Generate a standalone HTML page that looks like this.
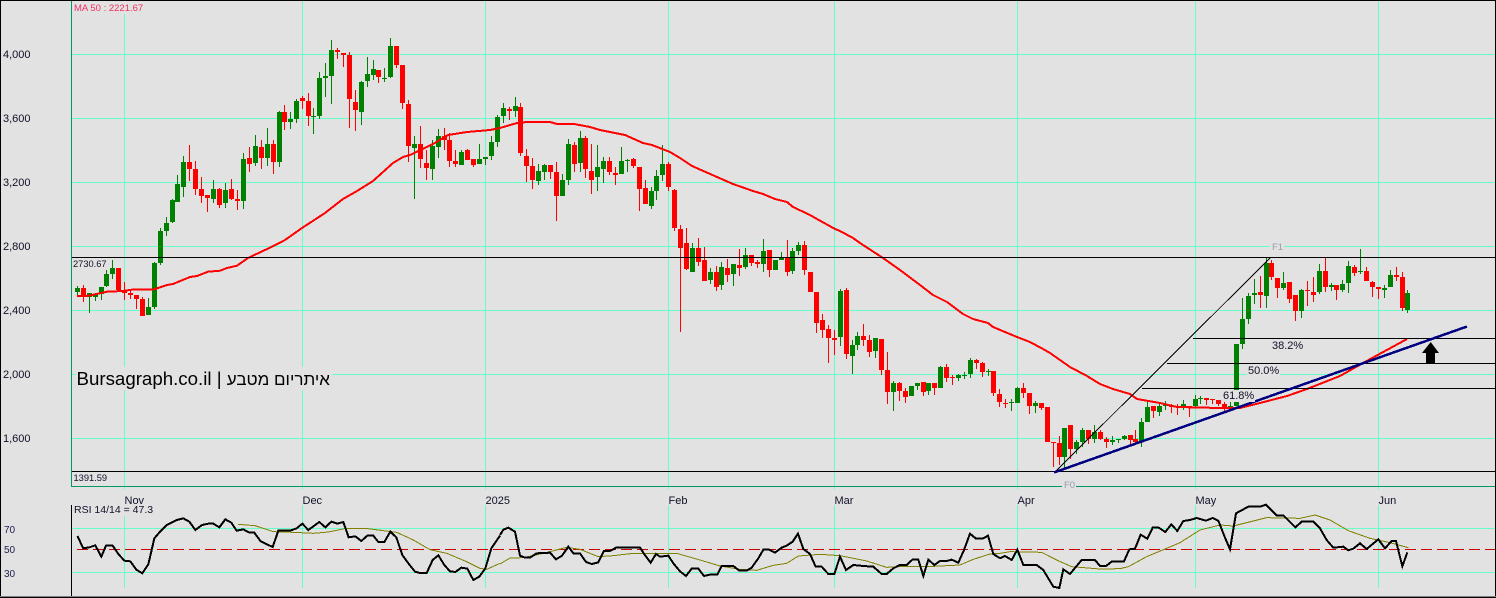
<!DOCTYPE html>
<html>
<head>
<meta charset="utf-8">
<title>Bursagraph</title>
<style>
html,body{margin:0;padding:0;background:#e2e2e2;width:1496px;height:598px;overflow:hidden}
svg{display:block}
text{font-family:"Liberation Sans",sans-serif;fill:#101028}
</style>
</head>
<body>
<svg xmlns="http://www.w3.org/2000/svg" width="1496" height="598" viewBox="0 0 1496 598">
<rect width="1496" height="598" fill="#e2e2e2"/>
<g shape-rendering="crispEdges">
<path fill="none" stroke="#66ffcc" stroke-width="1" d="M72 54.5H1495M72 118.5H1495M72 182.5H1495M72 246.5H1495M72 310.5H1495M72 374.5H1495M72 438.5H1495M72 528.5H1495M72 572.5H1495M124.5 14V489M302.5 1V489M485.5 1V489M668.5 1V489M834.5 1V489M1017.5 1V489M1195.5 1V489M1378.5 1V489M124.5 505V588M302.5 505V588M485.5 505V588M668.5 505V588M834.5 505V588M1017.5 505V588M1195.5 505V588M1378.5 505V588"/>
<!-- green wicks -->
<path fill="none" stroke="#008000" stroke-width="1" d="M77.5 286V296M89.5 293V313M95.5 293V301M101.5 287V300M106.5 270V287M112.5 260V279M148.5 298V315M154.5 262V309M160.5 228V265M166.5 217V236M172.5 199V223M177.5 175V202M183.5 156V197M213.5 180V203M225.5 183V208M243.5 153V209M255.5 135V166M267.5 128V166M279.5 111V167M290.5 112V129M296.5 99V123M313.5 108V134M319.5 72V119M325.5 63V97M331.5 40V104M361.5 81V125M367.5 57V87M373.5 60V80M384.5 68V82M390.5 38V78M414.5 136V199M432.5 140V180M438.5 129V158M461.5 150V165M479.5 144V164M485.5 157V165M491.5 136V160M497.5 115V147M503.5 103V123M515.5 97V117M538.5 164V185M544.5 164V180M562.5 174V196M568.5 139V185M580.5 131V172M597.5 145V191M603.5 157V183M621.5 147V174M627.5 159V172M651.5 187V209M656.5 170V200M662.5 145V181M692.5 243V272M710.5 268V284M721.5 262V290M733.5 264V286M745.5 248V269M763.5 239V272M775.5 260V270M781.5 252V260M792.5 248V274M798.5 242V255M840.5 289V346M852.5 340V374M857.5 332V350M875.5 338V358M893.5 381V411M911.5 386V396M917.5 383V390M928.5 383V395M940.5 366V388M958.5 374V381M964.5 372V379M970.5 358V378M988.5 369V376M1011.5 399V411M1017.5 387V403M1035.5 401V413M1064.5 428V470M1076.5 440V454M1082.5 428V447M1094.5 425V443M1112.5 436V445M1118.5 439V443M1124.5 435V440M1141.5 418V447M1147.5 402V422M1159.5 402V416M1165.5 401V410M1183.5 400V410M1195.5 395V407M1200.5 396V404M1230.5 402V408M1236.5 344V406M1242.5 298V349M1248.5 293V324M1254.5 279V304M1266.5 258V308M1283.5 272V290M1301.5 289V318M1319.5 264V294M1331.5 283V291M1342.5 280V292M1348.5 261V293M1360.5 249V274M1384.5 285V298M1390.5 270V287M1407.5 290V313"/>
<!-- green bodies -->
<path fill="none" stroke="#008000" stroke-width="5" d="M77.5 288V292M89.5 293V297M95.5 295V297M101.5 287V294M106.5 274V286M112.5 268V274M148.5 307V315M154.5 263V307M160.5 231V263M166.5 223V231M172.5 200V222M177.5 184V202M183.5 162V187M213.5 189V199M225.5 190V203M243.5 159V201M255.5 146V163M267.5 144V158M279.5 112V162M290.5 119V122M296.5 101V119M313.5 116V117M319.5 78V116M325.5 76V78M331.5 50V76M361.5 82V112M367.5 74V81M373.5 69V75M384.5 78V79M390.5 46V77M414.5 144V148M432.5 146V169M438.5 136V147M461.5 152V165M479.5 159V164M485.5 157V159M491.5 142V156M497.5 117V142M503.5 108V116M515.5 106V111M538.5 171V181M544.5 165V172M562.5 180V196M568.5 144V180M580.5 138V163M597.5 167V177M603.5 161V169M621.5 161V174M627.5 160V161M651.5 191V206M656.5 176V191M662.5 164V175M692.5 248V272M710.5 272V280M721.5 267V285M733.5 264V274M745.5 255V267M763.5 251V264M775.5 260V270M781.5 257V260M792.5 251V271M798.5 245V251M840.5 291V337M852.5 345V356M857.5 336V345M875.5 338V351M893.5 383V392M911.5 386V396M917.5 383V386M928.5 383V391M940.5 367V388M958.5 375V378M964.5 375V376M970.5 360V374M988.5 371V372M1011.5 402V403M1017.5 388V403M1035.5 403V406M1064.5 428V457M1076.5 442V449M1082.5 430V442M1094.5 432V439M1112.5 440V442M1118.5 439V440M1124.5 436V439M1141.5 422V441M1147.5 407V422M1159.5 406V412M1165.5 405V406M1183.5 404V407M1195.5 399V406M1200.5 398V399M1230.5 406V408M1236.5 344V406M1242.5 319V344M1248.5 296V319M1254.5 293V295M1266.5 263V296M1283.5 283V288M1301.5 290V311M1319.5 271V292M1331.5 285V287M1342.5 284V290M1348.5 266V283M1360.5 271V272M1384.5 288V290M1390.5 275V287M1407.5 293V310"/>
<!-- red wicks -->
<path fill="none" stroke="#ff0000" stroke-width="1" d="M83.5 285V302M118.5 268V291M124.5 282V300M130.5 290V299M136.5 295V309M142.5 297V316M189.5 145V181M195.5 161V195M201.5 177V203M207.5 195V212M219.5 188V208M231.5 179V200M237.5 190V210M249.5 147V172M261.5 140V169M273.5 140V174M284.5 105V130M302.5 96V109M308.5 93V126M337.5 48V59M343.5 53V67M349.5 52V128M355.5 90V131M378.5 70V83M396.5 46V68M402.5 65V109M408.5 100V162M420.5 126V168M426.5 150V180M444.5 128V150M449.5 133V167M455.5 150V167M467.5 149V160M473.5 159V167M509.5 107V120M520.5 103V156M526.5 149V182M532.5 158V189M550.5 165V179M556.5 162V221M574.5 142V172M585.5 136V178M591.5 144V194M609.5 157V175M615.5 167V185M633.5 158V168M639.5 167V211M645.5 180V204M668.5 162V191M674.5 189V231M680.5 225V332M686.5 228V270M698.5 238V266M704.5 247V281M716.5 266V291M727.5 259V282M739.5 249V276M751.5 255V266M757.5 260V268M769.5 250V277M787.5 240V276M804.5 241V275M810.5 272V292M816.5 292V333M822.5 314V338M828.5 325V363M834.5 330V355M846.5 288V359M863.5 324V346M869.5 335V357M881.5 339V375M887.5 352V404M899.5 382V401M905.5 388V403M923.5 382V396M934.5 383V395M946.5 364V382M952.5 375V385M976.5 359V369M982.5 362V377M993.5 371V396M999.5 389V407M1005.5 399V408M1023.5 383V398M1029.5 393V414M1041.5 403V410M1047.5 407V442M1053.5 442V467M1059.5 436V465M1070.5 425V459M1088.5 430V444M1100.5 430V440M1106.5 437V448M1130.5 435V444M1135.5 430V443M1153.5 406V418M1171.5 404V413M1177.5 404V415M1189.5 406V417M1206.5 398V405M1212.5 399V404M1218.5 400V406M1224.5 402V412M1260.5 276V308M1271.5 260V280M1277.5 278V298M1289.5 282V303M1295.5 295V321M1307.5 281V306M1313.5 277V302M1325.5 258V292M1336.5 285V300M1354.5 265V276M1366.5 267V281M1372.5 281V297M1378.5 287V299M1396.5 267V281M1402.5 272V311"/>
<!-- red bodies -->
<path fill="none" stroke="#ff0000" stroke-width="5" d="M83.5 288V297M118.5 268V290M124.5 291V293M130.5 293V295M136.5 295V299M142.5 299V316M189.5 162V169M195.5 169V189M201.5 189V196M207.5 195V198M219.5 189V205M231.5 189V199M237.5 199V201M249.5 158V164M261.5 147V158M273.5 144V162M284.5 112V122M302.5 98V101M308.5 101V116M337.5 50V52M343.5 53V55M349.5 55V99M355.5 102V110M378.5 70V77M396.5 46V65M402.5 65V103M408.5 104V146M420.5 144V159M426.5 163V168M444.5 136V140M449.5 140V161M455.5 161V164M467.5 150V160M473.5 159V165M509.5 109V111M520.5 107V153M526.5 156V166M532.5 166V180M550.5 165V172M556.5 172V196M574.5 145V164M585.5 138V169M591.5 171V180M609.5 161V172M615.5 173V175M633.5 159V166M639.5 167V189M645.5 188V204M668.5 164V187M674.5 190V228M680.5 229V248M686.5 243V269M698.5 248V262M704.5 260V281M716.5 272V287M727.5 268V275M739.5 265V268M751.5 255V263M757.5 262V264M769.5 250V270M787.5 258V272M804.5 245V270M810.5 272V292M816.5 292V323M822.5 320V330M828.5 329V338M834.5 338V340M846.5 290V354M863.5 336V340M869.5 340V352M881.5 339V370M887.5 370V392M899.5 383V391M905.5 391V397M923.5 382V392M934.5 383V388M946.5 367V378M952.5 377V378M976.5 360V363M982.5 363V372M993.5 371V393M999.5 394V402M1005.5 403V404M1023.5 388V393M1029.5 393V406M1041.5 403V408M1047.5 407V442M1053.5 442V443M1059.5 443V457M1070.5 425V449M1088.5 430V439M1100.5 432V439M1106.5 439V442M1130.5 435V440M1135.5 439V442M1153.5 406V411M1171.5 405V407M1177.5 406V407M1189.5 406V408M1206.5 398V400M1212.5 399V400M1218.5 400V404M1224.5 404V408M1260.5 292V295M1271.5 263V277M1277.5 278V288M1289.5 282V299M1295.5 295V311M1307.5 290V291M1313.5 292V295M1325.5 271V287M1336.5 285V290M1354.5 267V273M1366.5 271V281M1372.5 282V287M1378.5 287V289M1396.5 275V277M1402.5 277V308"/>
<!-- MA 50 -->
<polyline fill="none" stroke="#ff0000" stroke-width="2" points="77,296 89,295.7 107,291.7 123,291 132,289.7 153,289.7 167,285 173,284 190,277 197,276 208,271.7 220,270.7 227,268 237,265.7 248,258 272,246.7 285,240 302,228 325,213 343,199 357,191 373,181 393,163 403,157 410,155 433,144 448,135 467,132 490,130 500,128 517,123 527,122 550,122 557,124 574,124 590,127 600,130 610,132 625,135 643,143 652,145 670,152 680,158 692,166 717,177 733,184 753,191 763,194 775,199 787,202 793,207 810,215 817,219 835,229 840,231 853,238 860,243 883,258 900,270 920,285 933,295 947,302 963,314 973,319 988,323 993,327 1017,337 1030,342 1043,349 1050,353 1070,367 1087,376 1100,384 1113,389 1130,394 1137,399 1160,403 1177,407 1220,408 1240,408 1260,403 1287,396 1307,389 1340,376 1363,363 1407,339"/>
<!-- fib / level lines -->
<path fill="none" stroke="#000" stroke-width="1" d="M72 257.5H1495M72 471.5H1495M1193 338.5H1495M1167 363.5H1495M1142 388.5H1495M1056 471L1270 258"/>
<!-- trend -->
<path fill="none" stroke="#000080" stroke-width="2.5" d="M1054 472.5L1467 326.5"/>
<!-- frames -->
<path fill="none" stroke="#009966" stroke-width="1" d="M71.5 0V486.5H1495"/>
<path fill="none" stroke="#000" stroke-width="1" d="M71.5 505V596"/>
<rect x="0" y="0" width="1496" height="1" fill="#000"/>
<rect x="0" y="0" width="1" height="598" fill="#000"/>
<rect x="1495" y="0" width="1" height="598" fill="#000"/>
<rect x="0" y="596" width="1496" height="1" fill="#808080"/>
<rect x="0" y="597" width="1496" height="1" fill="#000"/>
<!-- RSI -->
<path fill="none" stroke="#cc0000" stroke-width="1" stroke-dasharray="11 5" d="M77 549.5H1495"/>
<polyline fill="none" stroke="#808000" stroke-width="3" transform="translate(0,400) scale(.33333)" points="714,373 765,377 820,395 880,397 940,400 985,396 1040,385 1095,385 1190,397 1240,420 1290,449 1340,460 1400,485 1440,505 1460,508 1500,490"/>
<polyline fill="none" stroke="#808000" stroke-width="3" transform="translate(500,490) scale(.33333)" points="0,222 30,204 70,203 130,190 200,172 240,178 295,200 340,197 400,190 470,190 530,190 600,210 660,228 720,238 770,241 820,226 860,220 895,198 960,193 1020,197 1100,213 1160,232 1200,230 1300,229 1380,225 1420,208 1470,192 1500,190"/>
<polyline fill="none" stroke="#808000" stroke-width="3" transform="translate(1000,490) scale(.33333)" points="0,190 30,185 125,187 170,210 215,230 300,237 360,236 385,230 440,200 500,175 540,158 600,120 660,105 700,108 800,83 900,85 945,75 990,90 1045,122 1110,145 1170,158 1225,173"/>
<polyline fill="none" stroke="#000" stroke-width="6" transform="translate(0,400) scale(.33333)" points="232,408 250,445 268,442 286,436 304,470 318,437 338,437 355,462 373,482 391,484 409,509 427,520 445,493 463,415 480,395 500,375 530,360 550,355 568,365 586,390 606,375 625,371 640,371 658,382 676,358 694,368 710,392 730,388 748,398 763,398 782,424 818,441 835,392 870,392 890,385 907,371 925,390 958,366 976,382 994,365 1012,371 1030,366 1046,412 1066,409 1084,423 1102,407 1120,407 1135,426 1153,426 1171,395 1189,412 1207,465 1225,490 1245,515 1260,519 1280,519 1298,480 1315,466 1333,495 1350,514 1366,516 1384,503 1402,506 1420,540 1438,530 1456,505 1474,445 1500,407"/>
<polyline fill="none" stroke="#000" stroke-width="6" transform="translate(500,490) scale(.33333)" points="0,135 10,119 25,113 45,125 60,197 75,203 90,203 110,190 150,188 168,208 186,197 205,170 220,190 240,190 258,216 275,222 295,217 312,183 330,183 348,173 420,173 436,197 452,218 468,192 480,200 505,197 520,220 540,244 558,258 575,236 595,236 612,258 630,254 652,254 665,228 700,228 718,242 740,242 755,233 775,205 790,179 808,179 825,188 845,173 860,167 878,155 894,131 910,177 930,192 947,230 965,230 985,252 1003,252 1020,200 1038,240 1060,225 1090,228 1120,230 1145,252 1160,252 1180,235 1200,225 1220,225 1237,209 1255,209 1270,258 1285,209 1303,225 1320,213 1340,213 1355,209 1375,218 1392,180 1410,131 1428,146 1448,146 1464,137 1480,192 1500,205"/>
<polyline fill="none" stroke="#000" stroke-width="6" transform="translate(1000,490) scale(.33333)" points="0,205 15,198 35,210 52,179 70,225 110,225 130,240 160,290 178,294 190,238 210,252 245,210 285,210 300,228 318,228 335,215 372,214 388,178 405,176 422,134 442,146 458,113 476,113 496,126 514,103 532,123 550,93 570,90 590,84 618,92 638,84 655,92 675,143 690,178 708,70 745,50 780,50 798,44 830,76 850,76 886,112 905,95 940,95 960,115 980,150 1000,173 1030,170 1045,181 1060,176 1080,160 1100,177 1135,148 1155,175 1175,153 1188,153 1207,229 1222,187"/>
<!-- arrow -->
<path fill="#000" shape-rendering="auto" d="M1430.7 342L1439 353H1435V363H1426V353H1422Z"/>
<!-- label backgrounds -->
<rect x="76" y="367" width="256" height="23" fill="#e2e2e2"/>
<rect x="1270" y="241" width="14" height="11" fill="#e2e2e2"/>
<rect x="1062" y="479" width="14" height="10" fill="#e2e2e2"/>
<rect x="1271" y="340" width="33" height="11" fill="#e2e2e2"/>
<rect x="1247" y="365" width="33" height="11" fill="#e2e2e2"/>
<rect x="1222" y="390" width="33" height="12" fill="#e2e2e2"/>
<rect x="73" y="505" width="74" height="11" fill="#e2e2e2"/>
</g>
<!-- text -->
<g font-size="11">
<text x="3" y="58">4,000</text>
<text x="3" y="122">3,600</text>
<text x="3" y="186">3,200</text>
<text x="3" y="250">2,800</text>
<text x="3" y="314">2,400</text>
<text x="3" y="378">2,000</text>
<text x="3" y="442">1,600</text>
<text x="124.5" y="504">Nov</text>
<text x="302.5" y="504">Dec</text>
<text x="485.5" y="504">2025</text>
<text x="668.5" y="504">Feb</text>
<text x="834.5" y="504">Mar</text>
<text x="1017.5" y="504">Apr</text>
<text x="1195.5" y="504">May</text>
<text x="1378.5" y="504">Jun</text>
<text x="1272" y="349">38.2%</text>
<text x="1248" y="374">50.0%</text>
<text x="1223" y="399">61.8%</text>
</g>
<text x="74" y="11" font-size="9.5" style="fill:#f03060">MA 50 : 2221.67</text>
<text x="73" y="267" font-size="9.3">2730.67</text>
<text x="73.5" y="481" font-size="9.3">1391.59</text>
<text x="74" y="513" font-size="10.5">RSI 14/14 = 47.3</text>
<g font-size="10">
<text x="4" y="533" style="fill:#202050">70</text>
<text x="4" y="553" style="fill:#202050">50</text>
<text x="4" y="577" style="fill:#202050">30</text>
</g>
<text x="1272" y="250" font-size="9.5" style="fill:#9a9ab0">F1</text>
<text x="1064" y="488" font-size="9.5" style="fill:#9a9ab0">F0</text>
<text x="76.5" y="385" font-size="18.7" style="fill:#000">Bursagraph.co.il | <tspan font-size="17">איתריום מטבע</tspan></text>
</svg>
</body>
</html>
